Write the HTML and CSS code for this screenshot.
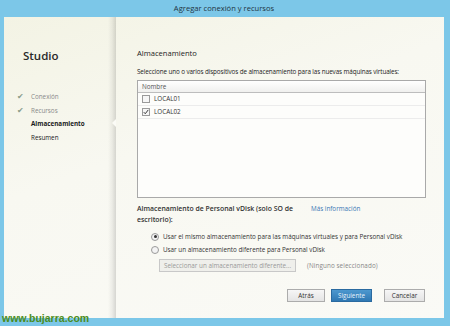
FILE: index.html
```html
<!DOCTYPE html>
<html lang="es">
<head>
<meta charset="utf-8">
<link rel="stylesheet" href="styles.css">
</head>
<body>
<div class="frame">
  <div class="titlebar">Agregar conexión y recursos</div>
  <div class="window">
    <aside class="sidebar">
      <div class="brand">Studio</div>
      <ul class="steps">
        <li class="done"><span class="check">✔</span>Conexión</li>
        <li class="done"><span class="check">✔</span>Recursos</li>
        <li class="current">Almacenamiento</li>
        <li>Resumen</li>
      </ul>
      <span class="notch"></span>
    </aside>
    <main class="main">
      <h1 class="heading">Almacenamiento</h1>
      <p class="intro">Seleccione uno o varios dispositivos de almacenamiento para las nuevas máquinas virtuales:</p>
      <div class="table">
        <div class="thead">Nombre</div>
        <div class="row"><span class="cb"></span>LOCAL01</div>
        <div class="row"><span class="cb checked"><svg viewBox="0 0 8 8" width="6" height="6"><path d="M1 4.2 L3 6.3 L7 1.2" fill="none" stroke="#333" stroke-width="1.3"/></svg></span>LOCAL02</div>
      </div>
      <div class="pvd">
        <div class="pvd-title">Almacenamiento de Personal vDisk (solo SO de escritorio):</div>
        <a class="more">Más información</a>
      </div>
      <div class="radios">
        <div class="radio"><span class="rb on"></span>Usar el mismo almacenamiento para las máquinas virtuales y para Personal vDisk</div>
        <div class="radio"><span class="rb"></span>Usar un almacenamiento diferente para Personal vDisk</div>
        <div class="select-row">
          <span class="btn disabled">Seleccionar un almacenamiento diferente...</span>
          <span class="none">(Ninguno seleccionado)</span>
        </div>
      </div>
      <div class="actions">
        <span class="btn">Atrás</span>
        <span class="btn primary">Siguiente</span>
        <span class="btn cancel">Cancelar</span>
      </div>
    </main>
  </div>
  <div class="watermark">www.bujarra.com</div>
</div>
</body>
</html>
```
FILE: styles.css
```css
html, body {
  margin: 0;
  padding: 0;
}
body {
  width: 450px;
  height: 326px;
  overflow: hidden;
  font-family: "Open Sans", "Noto Sans", sans-serif;
}
.frame {
  position: relative;
  width: 450px;
  height: 326px;
  box-sizing: border-box;
  background: #7cc7e8;
  padding: 0 6px 8px 4px;
  display: flex;
  flex-direction: column;
}
.titlebar {
  height: 17px;
  line-height: 16px;
  text-align: center;
  font-size: 7.6px;
  color: #1f3442;
}
.window {
  flex: 1;
  display: flex;
  background: linear-gradient(160deg, #f3f3e4 0%, #f8f8f1 40%, #fafaf6 100%);
}
.sidebar {
  position: relative;
  width: 112px;
  flex: none;
  background: linear-gradient(90deg, rgba(0,0,0,0) 0, rgba(0,0,0,0) 104px, rgba(0,0,0,0.05) 108px, rgba(0,0,0,0.14) 112px);
  padding-top: 31px;
  box-sizing: border-box;
}
.brand {
  padding-left: 19px;
  font-size: 11.5px;
  line-height: 16px;
  color: #2a2a2a;
  font-weight: 600;
}
.steps {
  list-style: none;
  margin: 26px 0 0 0;
  padding: 0 0 0 27px;
  font-size: 6.3px;
  color: #222;
}
.steps li {
  position: relative;
  height: 13.7px;
  line-height: 13.7px;
}
.steps li.done {
  color: #8a8a8a;
}
.steps li.current {
  font-weight: 700;
  color: #1a1a1a;
}
.check {
  position: absolute;
  left: -14px;
  color: #8a9c8a;
  font-size: 7.5px;
}
.notch {
  position: absolute;
  right: 0;
  top: 102px;
  width: 0;
  height: 0;
  border-top: 4px solid transparent;
  border-bottom: 4px solid transparent;
  border-right: 4px solid #fbfbf6;
}
.main {
  flex: 1;
  padding: 30px 18px 0 21px;
  display: flex;
  flex-direction: column;
  font-size: 6.3px;
  color: #222;
}
.heading {
  margin: 0;
  font-size: 7.6px;
  font-weight: 400;
  line-height: 12px;
  color: #222;
}
.intro {
  margin: 8px 0 0 0;
  line-height: 10px;
  white-space: nowrap;
  letter-spacing: -0.1px;
}
.table {
  margin-top: 3px;
  height: 118px;
  border: 1px solid #a9a9a9;
  background: #fdfdfb;
  box-sizing: border-box;
}
.thead {
  height: 11px;
  line-height: 12px;
  padding-left: 4px;
  color: #555;
  border-bottom: 1px solid #bdbdbd;
  background: linear-gradient(#ffffff, #f0f0ee);
}
.row {
  height: 12px;
  line-height: 12px;
  border-bottom: 1px solid #ececec;
  display: flex;
  align-items: center;
  padding-left: 4px;
  gap: 4px;
  color: #333;
}
.row:first-of-type {
  margin-top: 1px;
}
.cb {
  width: 6px;
  height: 6px;
  border: 1px solid #9a9a9a;
  background: #f6f6f6;
  display: flex;
  align-items: center;
  justify-content: center;
}
.pvd {
  margin-top: 5px;
  display: flex;
  gap: 8px;
}
.pvd-title {
  width: 166px;
  font-size: 6.9px;
  line-height: 11px;
  font-weight: 600;
  color: #333;
}
.more {
  color: #3b78b5;
  line-height: 11px;
}
.radios {
  margin-top: 5px;
  padding-left: 14px;
}
.radio {
  display: flex;
  align-items: center;
  gap: 4px;
  height: 13px;
  color: #333;
}
.rb {
  width: 6px;
  height: 6px;
  border: 1px solid #9a9a9a;
  border-radius: 50%;
  background: #f3f3f3;
  position: relative;
}
.rb.on::after {
  content: "";
  position: absolute;
  left: 1.5px;
  top: 1.5px;
  width: 3px;
  height: 3px;
  border-radius: 50%;
  background: #333;
}
.select-row {
  margin-top: 3px;
  padding-left: 8px;
  display: flex;
  align-items: center;
  gap: 11px;
}
.btn {
  display: inline-flex;
  align-items: center;
  justify-content: center;
  height: 13px;
  box-sizing: border-box;
  border: 1px solid #acacac;
  background: linear-gradient(#f6f6f6, #e4e4e4);
  color: #333;
  font-size: 6.3px;
}
.btn.disabled {
  width: 137px;
  color: #9a9a9a;
  border-color: #c8c8c8;
  background: #efefeb;
}
.none {
  color: #888;
  letter-spacing: 0.1px;
}
.actions {
  margin-top: 17px;
  display: flex;
  justify-content: flex-end;
  padding-right: 1px;
}
.actions .btn {
  width: 38px;
}
.actions .primary {
  margin-left: 6px;
  width: 41px;
  background: linear-gradient(#4d98cf, #2f78b3);
  border-color: #2a6aa0;
  color: #e8f3fb;
}
.actions .cancel {
  margin-left: 12px;
  width: 41px;
}
.watermark {
  position: absolute;
  left: 2px;
  top: 312px;
  font-family: "Liberation Sans", sans-serif;
  font-size: 10.5px;
  font-weight: 700;
  color: #4a8c1c;
  line-height: 13px;
}
```
